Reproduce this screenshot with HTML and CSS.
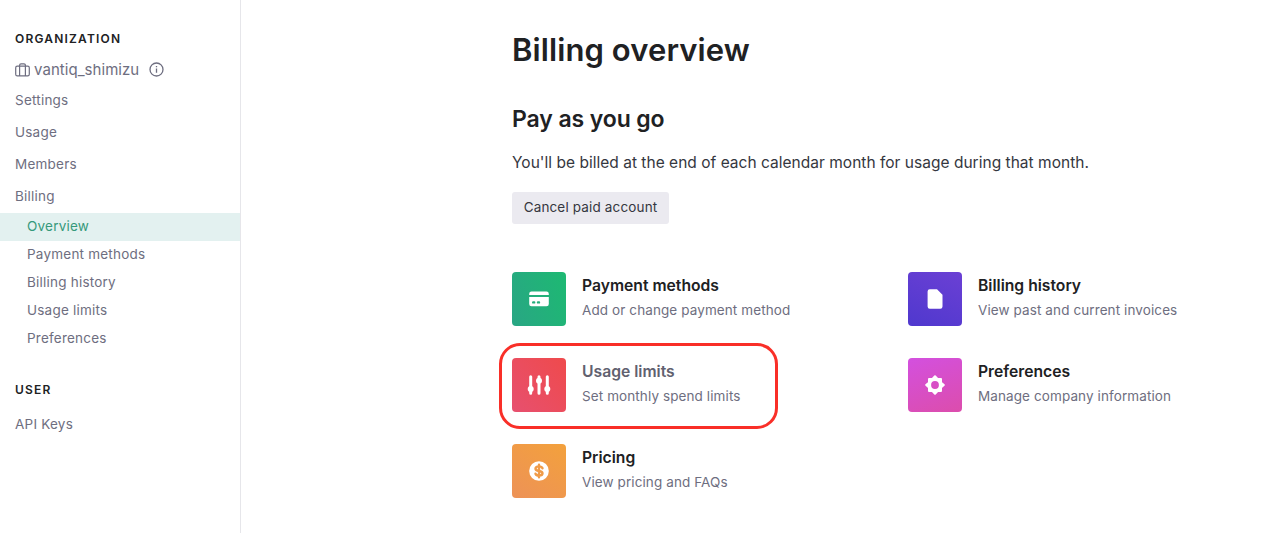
FILE: index.html
```html
<!DOCTYPE html>
<html lang="en">
<head>
    <meta charset="UTF-8">
    <meta name="viewport" content="width=device-width, initial-scale=1.0">
    <title>Billing overview</title>
    <link rel="stylesheet" href="styles.css">
</head>
<body>
    <nav class="sidebar">
        <div class="side-heading">ORGANIZATION</div>
        <div class="org">
            <svg class="org-icon" width="15" height="14" viewBox="0 0 15 14" fill="none" stroke="currentColor" stroke-width="1.2">
                <rect x="0.7" y="3.1" width="13.6" height="9.8" rx="1.6"/>
                <path d="M4.6 12.9V2.2a1.4 1.4 0 0 1 1.4-1.4h3a1.4 1.4 0 0 1 1.4 1.4v10.7"/>
            </svg>
            <span class="org-name">vantiq_shimizu</span>
            <svg class="info-icon" width="15" height="15" viewBox="0 0 15 15" fill="none" stroke="currentColor" stroke-width="1.3">
                <circle cx="7.5" cy="7.5" r="6.5"/>
                <path d="M7.5 6.6v4.2M7.5 4v1.3"/>
            </svg>
        </div>
        <a class="side-link">Settings</a>
        <a class="side-link">Usage</a>
        <a class="side-link">Members</a>
        <a class="side-link">Billing</a>
        <a class="sub-link active">Overview</a>
        <a class="sub-link">Payment methods</a>
        <a class="sub-link">Billing history</a>
        <a class="sub-link">Usage limits</a>
        <a class="sub-link">Preferences</a>
        <div class="side-heading user-heading">USER</div>
        <a class="side-link">API Keys</a>
    </nav>

    <main class="content">
        <h1 class="page-title">Billing overview</h1>
        <h2 class="plan-title">Pay as you go</h2>
        <p class="plan-text">You'll be billed at the end of each calendar month for usage during that month.</p>
        <button class="cancel-button">Cancel paid account</button>

        <div class="cards">
            <a class="card">
                <span class="tile green">
                    <svg width="20" height="20" viewBox="0 0 20 20">
                        <path fill="#fff" d="M2.5 2.6h15a2.3 2.3 0 0 1 2.3 2.2v1.3H.2V4.8a2.3 2.3 0 0 1 2.3-2.2z"/>
                        <path fill="#fff" fill-rule="evenodd" d="M.2 7.9h19.6V15a2.3 2.3 0 0 1-2.3 2.3h-15A2.3 2.3 0 0 1 .2 15zM4.2 12.2a1.2 1.2 0 0 0 0 2.4h1a1.2 1.2 0 0 0 0-2.4zM9 12.2a1.2 1.2 0 0 0 0 2.4h1a1.2 1.2 0 0 0 0-2.4z"/>
                    </svg>
                </span>
                <span class="card-text">
                    <span class="card-title">Payment methods</span>
                    <span class="card-desc">Add or change payment method</span>
                </span>
            </a>
            <a class="card">
                <span class="tile purple">
                    <svg width="20" height="20" viewBox="0 0 20 20">
                        <path fill="#fff" d="M4.8.3H12l5.5 5.5v11.7a2.2 2.2 0 0 1-2.2 2.2H4.8a2.2 2.2 0 0 1-2.2-2.2v-15A2.2 2.2 0 0 1 4.8.3z"/>
                    </svg>
                </span>
                <span class="card-text">
                    <span class="card-title">Billing history</span>
                    <span class="card-desc">View past and current invoices</span>
                </span>
            </a>
            <a class="card highlighted">
                <span class="tile red">
                    <svg width="24" height="20" viewBox="0 0 24 20" stroke="#fff" stroke-width="3" stroke-linecap="round" fill="#fff">
                        <path d="M3.7 1.8v16.4M12 1.8v16.4M20.3 1.8v16.4"/>
                        <circle cx="3.7" cy="14" r="1.5"/>
                        <circle cx="12" cy="5.8" r="1.5"/>
                        <circle cx="20.3" cy="14" r="1.5"/>
                    </svg>
                </span>
                <span class="card-text">
                    <span class="card-title">Usage limits</span>
                    <span class="card-desc">Set monthly spend limits</span>
                </span>
            </a>
            <a class="card">
                <span class="tile pink">
                    <svg width="20" height="20" viewBox="-10 -10 20 20">
                        <path fill="#fff" stroke="#fff" stroke-width="2" stroke-linejoin="round" fill-rule="evenodd" d="M0-8.800L2.500-6L6-6L6-2.500L8.800 0L6 2.500L6 6L2.500 6L0 8.800L-2.500 6L-6 6L-6 2.500L-8.800 0L-6-2.500L-6-6L-2.500-6zM4.900 0A4.900 4.900 0 1 0-4.900 0A4.900 4.900 0 1 0 4.900 0z"/>
                    </svg>
                </span>
                <span class="card-text">
                    <span class="card-title">Preferences</span>
                    <span class="card-desc">Manage company information</span>
                </span>
            </a>
            <a class="card">
                <span class="tile orange">
                    <svg width="20" height="20" viewBox="0 0 20 20" fill="none">
                        <circle cx="10" cy="10" r="9.8" fill="#fff"/>
                        <path stroke="#f09b48" stroke-width="2.4" stroke-linecap="round" d="M13.5 7.3C13 6 11.6 5.4 10 5.4c-2 0-3.5.9-3.5 2.3 0 3.2 7 1.4 7 4.6 0 1.4-1.5 2.3-3.5 2.3-1.6 0-3-.6-3.5-1.9M10 3.7v12.6"/>
                    </svg>
                </span>
                <span class="card-text">
                    <span class="card-title">Pricing</span>
                    <span class="card-desc">View pricing and FAQs</span>
                </span>
            </a>
        </div>
    </main>
</body>
</html>
```
FILE: styles.css
```css
* {
    box-sizing: border-box;
}
body {
    display: flex;
    height: 533px;
    margin: 0;
    overflow: hidden;
    background: #fff;
    color: #202123;
    font-family: Inter, "Liberation Sans", sans-serif;
}
.sidebar {
    width: 241px;
    flex-shrink: 0;
    padding-top: 30px;
    border-right: 1px solid #e6e6ea;
    color: #6e6e80;
    font-size: 13.5px;
    letter-spacing: 0.22px;
}
.side-heading {
    padding-left: 15px;
    color: #202123;
    font-size: 12px;
    font-weight: 600;
    line-height: 18px;
    letter-spacing: 1.2px;
}
.org {
    display: flex;
    align-items: center;
    height: 35px;
    margin: 4px 0 1px;
    padding-left: 15px;
    font-size: 15px;
    letter-spacing: 0.05px;
}
.org-name {
    margin: 0 10px 0 4px;
}
.side-link {
    display: block;
    height: 32px;
    padding-left: 15px;
    line-height: 24px;
}
.sub-link {
    display: block;
    height: 28px;
    padding-left: 27px;
    line-height: 26px;
}
.org + .side-link + .side-link + .side-link + .side-link {
    height: 29px;
}
.sub-link.active {
    background: #e3f1f0;
    color: #36997b;
}
.user-heading {
    margin: 28px 0 13px;
}
.content {
    padding: 30px 0 0 271px;
}
.page-title {
    margin: 0;
    font-size: 31px;
    font-weight: 600;
    line-height: 40px;
    letter-spacing: 0.1px;
}
.plan-title {
    margin: 33px 0 0;
    font-size: 23px;
    font-weight: 600;
    line-height: 32px;
    letter-spacing: -0.1px;
}
.plan-text {
    margin: 16px 0 17px;
    color: #353740;
    font-size: 15.5px;
    line-height: 24px;
    letter-spacing: 0.02px;
    white-space: nowrap;
}
.cancel-button {
    display: block;
    width: 157px;
    height: 32px;
    padding: 0 0 2px;
    border: none;
    border-radius: 3px;
    background: #ebeaf0;
    color: #353740;
    font-family: inherit;
    font-size: 13.5px;
    letter-spacing: 0.15px;
}
.cards {
    display: grid;
    grid-template-columns: 396px 300px;
    gap: 32px 0;
    margin-top: 48px;
}
.card {
    position: relative;
    display: flex;
    gap: 16px;
    height: 54px;
}
/* marker outline around the card */
.highlighted::after {
    content: "";
    box-sizing: border-box;
    position: absolute;
    left: -13px;
    top: -15px;
    width: 279px;
    height: 86px;
    border: 3px solid #f92f28;
    border-radius: 21px;
}
.highlighted .card-title {
    color: #61616f;
}
.tile {
    display: flex;
    align-items: center;
    justify-content: center;
    width: 54px;
    height: 54px;
    border-radius: 4px;
}
.green {
    background: linear-gradient(70deg, #29a684, #1db972);
}
.purple {
    background: linear-gradient(25deg, #4f38ce, #6b40d4);
}
.red {
    background: linear-gradient(50deg, #e7506f, #ef4a4c);
}
.pink {
    background: linear-gradient(160deg, #d350df, #dc4dac);
}
.orange {
    background: linear-gradient(35deg, #ed9257, #f3a13c);
}
.card-text {
    display: flex;
    flex-direction: column;
    white-space: nowrap;
}
.card-title {
    font-size: 15.7px;
    font-weight: 600;
    line-height: 27px;
}
.card-desc {
    color: #6e6e80;
    font-size: 13.5px;
    line-height: 22px;
    letter-spacing: 0.1px;
}
```
